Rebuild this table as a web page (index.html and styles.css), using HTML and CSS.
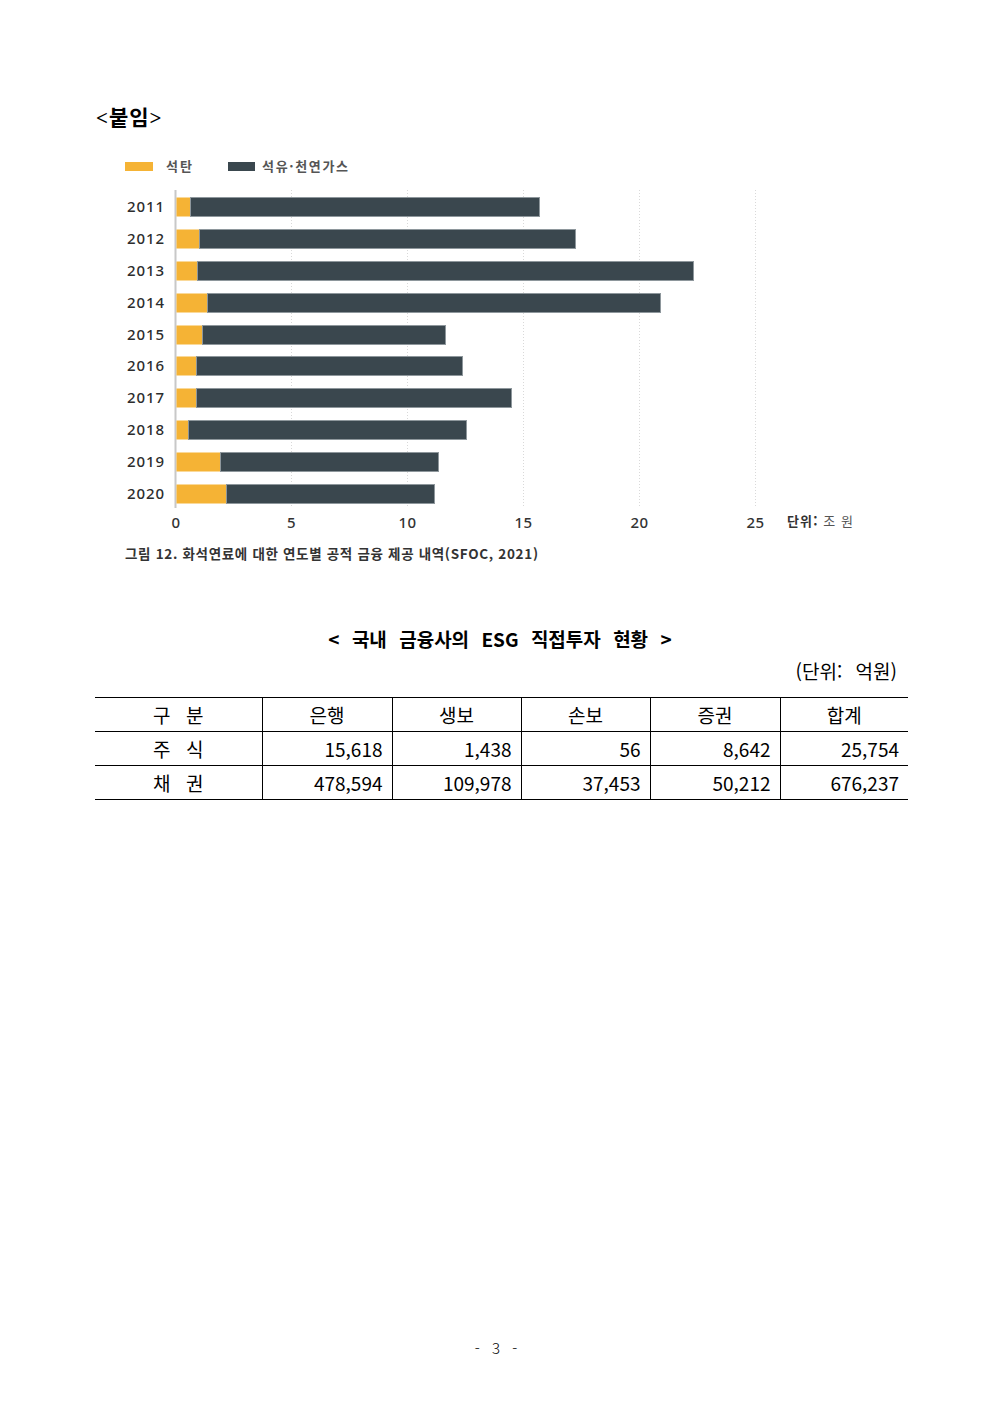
FILE: index.html
```html
<!DOCTYPE html>
<html lang="ko">
<head>
<meta charset="utf-8">
<link rel="stylesheet" href="styles.css">
</head>
<body>
<div class="page">
  <div class="attach">&lt;붙임&gt;</div>

  <svg class="chart" viewBox="0 150 992 420" width="992" height="420" xmlns="http://www.w3.org/2000/svg">
    <!-- legend -->
    <rect x="125" y="162" width="28" height="9" fill="#f5b335"/>
    <text class="legend" x="166" y="171" textLength="26" lengthAdjust="spacing">석탄</text>
    <rect x="228" y="162" width="27" height="9" fill="#3a474e"/>
    <text class="legend" x="262" y="171" textLength="86" lengthAdjust="spacing">석유·천연가스</text>

    <!-- grid lines -->
    <g stroke="#d9d9d9" stroke-width="1" stroke-dasharray="1 2">
      <line x1="291.5" y1="190" x2="291.5" y2="508"/>
      <line x1="407.5" y1="190" x2="407.5" y2="508"/>
      <line x1="523.5" y1="190" x2="523.5" y2="508"/>
      <line x1="639.5" y1="190" x2="639.5" y2="508"/>
      <line x1="755.5" y1="190" x2="755.5" y2="508"/>
    </g>
    <line x1="175.5" y1="190" x2="175.5" y2="508" stroke="#c8c8c8" stroke-width="2"/>

    <!-- bars -->
    <g stroke="#8e979c" stroke-width="1">
      <rect x="176.5" y="197.5" width="14" height="19" fill="#f5b335" stroke="none"/>
      <rect x="190.5" y="197.5" width="349" height="19" fill="#3a474e"/>

      <rect x="176.5" y="229.5" width="23" height="19" fill="#f5b335" stroke="none"/>
      <rect x="199.5" y="229.5" width="376" height="19" fill="#3a474e"/>

      <rect x="176.5" y="261.5" width="21" height="19" fill="#f5b335" stroke="none"/>
      <rect x="197.5" y="261.5" width="496" height="19" fill="#3a474e"/>

      <rect x="176.5" y="293.5" width="31" height="19" fill="#f5b335" stroke="none"/>
      <rect x="207.5" y="293.5" width="453" height="19" fill="#3a474e"/>

      <rect x="176.5" y="325.5" width="26" height="19" fill="#f5b335" stroke="none"/>
      <rect x="202.5" y="325.5" width="243" height="19" fill="#3a474e"/>

      <rect x="176.5" y="356.5" width="20" height="19" fill="#f5b335" stroke="none"/>
      <rect x="196.5" y="356.5" width="266" height="19" fill="#3a474e"/>

      <rect x="176.5" y="388.5" width="20" height="19" fill="#f5b335" stroke="none"/>
      <rect x="196.5" y="388.5" width="315" height="19" fill="#3a474e"/>

      <rect x="176.5" y="420.5" width="12" height="19" fill="#f5b335" stroke="none"/>
      <rect x="188.5" y="420.5" width="278" height="19" fill="#3a474e"/>

      <rect x="176.5" y="452.5" width="44" height="19" fill="#f5b335" stroke="none"/>
      <rect x="220.5" y="452.5" width="218" height="19" fill="#3a474e"/>

      <rect x="176.5" y="484.5" width="50" height="19" fill="#f5b335" stroke="none"/>
      <rect x="226.5" y="484.5" width="208" height="19" fill="#3a474e"/>
    </g>

    <!-- year labels -->
    <g class="year">
      <text x="127" y="212" textLength="37">2011</text>
      <text x="127" y="244" textLength="37">2012</text>
      <text x="127" y="276" textLength="37">2013</text>
      <text x="127" y="308" textLength="37">2014</text>
      <text x="127" y="340" textLength="37">2015</text>
      <text x="127" y="371" textLength="37">2016</text>
      <text x="127" y="403" textLength="37">2017</text>
      <text x="127" y="435" textLength="37">2018</text>
      <text x="127" y="467" textLength="37">2019</text>
      <text x="127" y="499" textLength="37">2020</text>
    </g>

    <!-- axis labels -->
    <g class="tick">
      <text x="176" y="528">0</text>
      <text x="291.5" y="528">5</text>
      <text x="407.5" y="528">10</text>
      <text x="523.5" y="528">15</text>
      <text x="639.5" y="528">20</text>
      <text x="755.5" y="528">25</text>
    </g>
    <text class="unit" x="787" y="526" textLength="66" lengthAdjust="spacing"><tspan class="unit-b">단위:</tspan> 조 원</text>

    <text class="caption" x="125" y="559" textLength="413" lengthAdjust="spacing">그림 12. 화석연료에 대한 연도별 공적 금융 제공 내역(SFOC, 2021)</text>
  </svg>

  <h2 class="title">&lt; 국내 금융사의 ESG 직접투자 현황 &gt;</h2>
  <div class="unit-note">(단위: 억원)</div>

  <table class="esg">
    <colgroup>
      <col class="c0"><col class="c1"><col class="c2"><col class="c3"><col class="c4"><col class="c5">
    </colgroup>
    <thead>
      <tr>
        <th>구 분</th><th>은행</th><th>생보</th><th>손보</th><th>증권</th><th>합계</th>
      </tr>
    </thead>
    <tbody>
      <tr>
        <th>주 식</th><td>15,618</td><td>1,438</td><td>56</td><td>8,642</td><td>25,754</td>
      </tr>
      <tr>
        <th>채 권</th><td>478,594</td><td>109,978</td><td>37,453</td><td>50,212</td><td>676,237</td>
      </tr>
    </tbody>
  </table>

  <div class="spacer"></div>
  <div class="page-num">- 3 -</div>
</div>
</body>
</html>
```

FILE: styles.css
```css
html, body {
  margin: 0;
  padding: 0;
  background: #fff;
}

.page {
  width: 992px;
  height: 1403px;
  display: flex;
  flex-direction: column;
  font-family: "Noto Sans CJK KR", "Noto Sans", sans-serif;
  color: #000;
}

.attach {
  margin: 104px 0 0 96px;
  height: 28px;
  line-height: 28px;
  font-size: 21px;
  font-weight: 700;
  font-family: "Liberation Serif", "Noto Sans CJK KR", serif;
  letter-spacing: 1px;
}

.chart {
  display: block;
  margin-top: 18px;
}

.legend {
  font-family: "Noto Sans CJK KR", sans-serif;
  font-size: 13px;
  font-weight: 700;
  fill: #555;
}

.year text {
  font-family: "Noto Sans", "Open Sans", sans-serif;
  font-size: 15px;
  font-weight: 500;
  fill: #2d2d2d;
}

.tick text {
  font-family: "Noto Sans", "Open Sans", sans-serif;
  font-size: 15px;
  font-weight: 500;
  fill: #333;
  text-anchor: middle;
  letter-spacing: 0.5px;
}

.unit {
  font-family: "Noto Sans CJK KR", sans-serif;
  font-size: 13px;
  fill: #555;
}

.unit-b {
  font-weight: 700;
  fill: #333;
}

.caption {
  font-family: "Noto Sans CJK KR", sans-serif;
  font-size: 13.5px;
  font-weight: 700;
  fill: #333;
}

.title {
  margin: 56px 0 0 0;
  height: 26px;
  line-height: 26px;
  text-align: center;
  font-size: 19px;
  font-weight: 700;
  word-spacing: 7px;
  padding-left: 8px;
}

.unit-note {
  margin: 6px 95px 0 0;
  text-align: right;
  font-size: 19px;
  line-height: 26px;
  height: 26px;
  word-spacing: 8px;
}

.esg {
  margin: 13px 0 0 95px;
  width: 813px;
  border-collapse: collapse;
  table-layout: fixed;
  font-size: 19px;
}

.c0 { width: 167px; }
.c1 { width: 130px; }
.c2 { width: 129px; }
.c3 { width: 129px; }
.c4 { width: 130px; }
.c5 { width: 128px; }

.esg th,
.esg td {
  height: 33px;
  padding: 0 9px 0 0;
  border-top: 1px solid #000;
  border-bottom: 1px solid #000;
  border-left: 1px solid #000;
  font-weight: 400;
  line-height: 33px;
  box-sizing: border-box;
}

.esg th {
  text-align: center;
  padding: 0;
  word-spacing: 10px;
}

.esg td {
  text-align: right;
}

.esg tr > :first-child {
  border-left: none;
}

.spacer {
  flex: 1;
}

.page-num {
  margin-bottom: 45px;
  text-align: center;
  font-size: 15px;
  font-weight: 300;
  word-spacing: 8px;
}
```
